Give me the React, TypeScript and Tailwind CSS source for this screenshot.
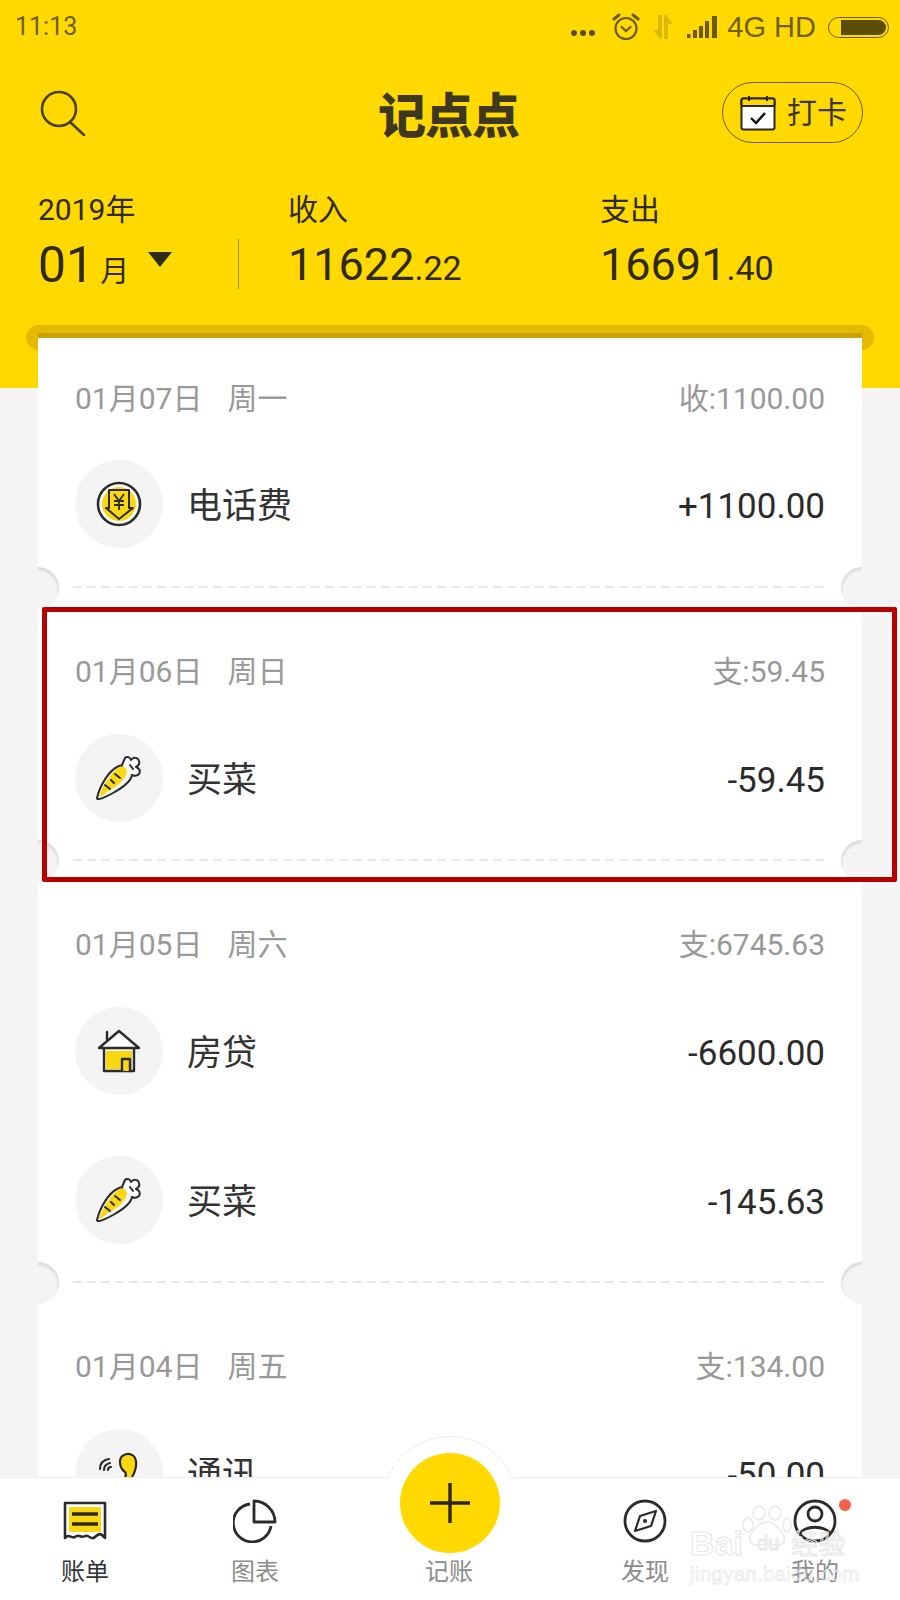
const font = { fontFamily: '"Roboto", "Noto Sans CJK SC", sans-serif' };

function SearchIcon() {
  return (
    <svg width="46" height="46" viewBox="0 0 46 46" fill="none" stroke="#4a4218" strokeWidth="2.6" strokeLinecap="round">
      <circle cx="19" cy="19" r="17" />
      <path d="M30 32 L44 45" />
    </svg>
  );
}

function CalendarIcon() {
  return (
    <svg width="36" height="36" viewBox="0 0 36 36" fill="none">
      <rect x="1.5" y="3.5" width="33" height="31" rx="2" fill="#fff" stroke="#2b2616" strokeWidth="2" />
      <path d="M1 4 H35 V11 H1 Z" fill="#ffd900" />
      <path d="M1.5 11 H34.5 M1.5 11 V5 Q1.5 3.5 3 3.5 H33 Q34.5 3.5 34.5 5 V11" stroke="#2b2616" strokeWidth="2" />
      <path d="M9 1 V6 M27 1 V6" stroke="#2b2616" strokeWidth="2" />
      <path d="M11 23 L16 28 L25 18" stroke="#111" strokeWidth="2.4" />
    </svg>
  );
}

function AlarmIcon() {
  return (
    <svg width="28" height="28" viewBox="0 0 28 28" fill="none" stroke="#6b5a08" strokeWidth="2.2" strokeLinecap="round">
      <circle cx="14" cy="15.5" r="10.5" />
      <path d="M9.5 14 L14 18 L18.5 14" />
      <path d="M2 6 L7 2 M26 6 L21 2" strokeWidth="3" />
    </svg>
  );
}

function StatusBar() {
  return (
    <div className="flex h-[52px] items-center justify-between pl-[15px] pr-[11px] pt-[2px] text-[#6f5f08]">
      <span className="text-[25px]" style={font}>11:13</span>
      <div className="flex items-center">
        <div className="mt-[12px] flex gap-[3px]">
          <div className="h-[6px] w-[6px] rounded-full bg-[#5a4d08]" />
          <div className="h-[6px] w-[6px] rounded-full bg-[#5a4d08]" />
          <div className="h-[6px] w-[6px] rounded-full bg-[#5a4d08]" />
        </div>
        <div className="ml-[17px]"><AlarmIcon /></div>
        <svg className="ml-[12px]" width="22" height="24" viewBox="0 0 22 24" fill="#d9b908">
          <path d="M6 0 H10 V24 H8 L1 15 H6 Z" />
          <path d="M12 0 H14 L21 9 H16 V24 H12 Z" />
        </svg>
        <svg className="ml-[13px]" width="31" height="22" viewBox="0 0 31 22" fill="#6b5a08">
          <rect x="0" y="18" width="3.5" height="4" />
          <rect x="6" y="14" width="4" height="8" />
          <rect x="12" y="10" width="4" height="12" />
          <rect x="18" y="5" width="4" height="17" />
          <rect x="25" y="0" width="5" height="22" />
        </svg>
        <span className="ml-[9px] text-[29px] leading-none" style={{ fontFamily: '"Liberation Sans", sans-serif' }}>4G HD</span>
        <div className="ml-[12px] flex h-[21px] w-[61px] items-center justify-end rounded-full border-[1.5px] border-[#6b5a08] p-[2px]">
          <div className="h-[15px] w-[45px] rounded-r-full rounded-l-[3px] bg-[#5a4d08]" />
        </div>
      </div>
    </div>
  );
}

function TopBar() {
  return (
    <div className="relative mt-[30px] flex h-[61px] items-center justify-between pl-[40px] pr-[37px]">
      <SearchIcon />
      <span
        className="absolute left-[378px] top-[-3px] text-[48px] leading-[66px] font-black tracking-[-1px] text-[#3d3720]"
        style={{ fontFamily: '"Noto Sans CJK SC", sans-serif' }}
      >
        记点点
      </span>
      <div className="flex h-[61px] w-[141px] items-center gap-[11px] rounded-full border border-[#6b5a08] pl-[17px]">
        <CalendarIcon />
        <span className="text-[30px] text-[#3d3720]" style={font}>打卡</span>
      </div>
    </div>
  );
}

function Summary() {
  return (
    <div className="mt-[50px] flex pl-[38px] text-[#2e2a16]" style={font}>
      <div className="w-[200px]">
        <div className="text-[30px] leading-[34px]">2019年</div>
        <div className="mt-[12px] flex items-baseline">
          <span className="text-[50px] leading-[52px]">01</span>
          <span className="ml-[6px] text-[29px]">月</span>
          <div className="mb-[14px] ml-[19px] h-0 w-0 self-center border-x-[12px] border-t-[15px] border-x-transparent border-t-[#2e2a16]" />
        </div>
      </div>
      <div className="mt-[46px] h-[50px] w-px bg-[#a89108]" />
      <div className="ml-[49px] w-[312px]">
        <div className="text-[30px] leading-[34px]">收入</div>
        <div className="mt-[12px] leading-[52px]">
          <span className="text-[45px]">11622</span>
          <span className="text-[34px]">.22</span>
        </div>
      </div>
      <div>
        <div className="text-[30px] leading-[34px]">支出</div>
        <div className="mt-[12px] leading-[52px]">
          <span className="text-[45px]">16691</span>
          <span className="text-[34px]">.40</span>
        </div>
      </div>
    </div>
  );
}

function YuanIcon() {
  return (
    <svg width="46" height="46" viewBox="0 0 46 46" fill="none">
      <circle cx="23" cy="23" r="21" fill="#fff" stroke="#2b2b2b" strokeWidth="2.6" />
      <circle cx="23" cy="23" r="17" fill="#fbd70f" />
      <path d="M13 9 H33 V27 L37 27 L23 38 L10 27 L13 27 Z" fill="#fbd70f" stroke="#2b2b2b" strokeWidth="2" strokeLinejoin="round" />
      <path d="M18 13 L23 20 L28 13 M23 20 V29 M18 20 H28 M18 24 H28" stroke="#2b2b2b" strokeWidth="1.8" />
    </svg>
  );
}

function CarrotIcon() {
  return (
    <svg width="46" height="46" viewBox="0 0 46 46" fill="none" stroke="#2b2b2b" strokeWidth="2" strokeLinecap="round" strokeLinejoin="round">
      <path d="M3 42 C7 30 15 18 22 13 C26 10 30 11 31 15 C31 23 22 31 14 35 C9 38 5 42 3 42 Z" fill="#fbd70f" stroke="none" />
      <path d="M1 43 C4 30 13 16 21 12 C25 9 28 10 31 12 C34 14 36 17 36 20 C35 26 26 33 17 38 C10 42 1 46 1 43 Z" />
      <path d="M26 10 L29 3 C31 1 34 2 35 5 C37 2 42 2 43 6 C44 9 42 11 40 12 C43 13 45 16 43 19 C41 21 38 21 36 20" fill="#fff" />
      <path d="M34 10 L37 14" />
      <path d="M19 19 L24 23 M9 30 L14 34 M15 25 L18 28" />
    </svg>
  );
}

function HouseIcon() {
  return (
    <svg width="46" height="46" viewBox="0 0 46 46" fill="none" stroke="#2b2b2b" strokeWidth="2.4" strokeLinejoin="round" strokeLinecap="round">
      <rect x="10" y="23" width="26" height="18" fill="#fbd70f" stroke="none" />
      <path d="M8 20 V43 H38 V20" />
      <path d="M3 20 L23 3 L43 20 Z" fill="#fff" />
      <path d="M11 12 V4" />
      <path d="M26 43 V31 H34 V43" fill="#fbd70f" />
    </svg>
  );
}

function EarIcon() {
  return (
    <svg width="46" height="46" viewBox="0 0 46 46" fill="none" stroke="#2b2b2b" strokeWidth="2.2" strokeLinecap="round" strokeLinejoin="round">
      <path d="M24 12 C23 3 38 0 40 11 C41 20 37 26 34 30 C31 34 28 40 24 40 C27 32 32 26 29 22 C26 20 24 17 24 12 Z" fill="#fbd70f" />
      <path d="M4 19 C4 13 7 10 13 9 M8 20 C8 16 10 14 14 13 M12 20 C12 18 13 17 15 17" />
    </svg>
  );
}

const sections = [
  {
    date: "01月07日",
    week: "周一",
    total: "收:1100.00",
    items: [{ icon: YuanIcon, name: "电话费", amount: "+1100.00" }],
  },
  {
    date: "01月06日",
    week: "周日",
    total: "支:59.45",
    items: [{ icon: CarrotIcon, name: "买菜", amount: "-59.45" }],
  },
  {
    date: "01月05日",
    week: "周六",
    total: "支:6745.63",
    items: [
      { icon: HouseIcon, name: "房贷", amount: "-6600.00" },
      { icon: CarrotIcon, name: "买菜", amount: "-145.63" },
    ],
  },
  {
    date: "01月04日",
    week: "周五",
    total: "支:134.00",
    items: [{ icon: EarIcon, name: "通讯", amount: "-50.00" }],
  },
];

function Section({ data, index }: { data: (typeof sections)[number]; index: number }) {
  return (
    <div className={index === 0 ? "relative pb-[40px] pl-[37px] pr-[37px] pt-[40px]" : "relative pb-[39px] pl-[37px] pr-[37px] pt-[63px]"}>
      <div className="flex h-[40px] items-center justify-between text-[30px] text-[#999999]">
        <div className="flex gap-[25px]">
          <span>{data.date}</span>
          <span>{data.week}</span>
        </div>
        <span>{data.total}</span>
      </div>
      <div className={index === 0 ? "mt-[42px] flex flex-col gap-[61px]" : "mt-[43px] flex flex-col gap-[61px]"}>
        {data.items.map((item) => (
          <div key={item.name} className="flex h-[88px] items-center">
            <div className="flex h-[88px] w-[88px] items-center justify-center rounded-full bg-[#f4f4f4]">
              <item.icon />
            </div>
            <span className="ml-[24px] pt-[6px] text-[35px] text-[#333333]">{item.name}</span>
            <span className="ml-auto pt-[6px] text-[35px] text-[#2b2b2b]">{item.amount}</span>
          </div>
        ))}
      </div>
      <div className="absolute bottom-0 left-[35px] right-[35px] h-[2px] bg-[repeating-linear-gradient(90deg,#e9e9e9_0_9px,transparent_9px_14px)]" />
      <div className="absolute bottom-[-21px] left-[-21px] h-[42px] w-[42px] rounded-full bg-[#f4f4f4] shadow-[inset_-1px_3px_2px_#dedede]" />
      <div className="absolute bottom-[-21px] right-[-21px] h-[42px] w-[42px] rounded-full bg-[#f4f4f4] shadow-[inset_1px_3px_2px_#dedede]" />
    </div>
  );
}

function BillIcon() {
  return (
    <svg width="44" height="40" viewBox="0 0 44 40" fill="none" stroke="#2b2b2b" strokeLinejoin="round">
      <rect x="6" y="6" width="32" height="25" fill="#fbd70f" stroke="none" />
      <path d="M2 37 V2 H42 V37 C38 32 36 32 32 36 C28 40 26 33 22 35 C18 38 16 32 12 36 C8 38 6 32 2 37 Z" strokeWidth="2.6" />
      <path d="M9 13 H35 M9 23 H35" strokeWidth="3.6" />
    </svg>
  );
}

function PieIcon() {
  return (
    <svg width="44" height="44" viewBox="0 0 44 44" fill="none" stroke="#2b2b2b" strokeWidth="2.8">
      <path d="M17 5 A19 19 0 1 0 38 27" />
      <path d="M21 2 A21 21 0 0 1 42 23 H21 Z" strokeLinejoin="round" />
    </svg>
  );
}

function CompassIcon() {
  return (
    <svg width="44" height="44" viewBox="0 0 44 44" fill="none" stroke="#2b2b2b" strokeWidth="2.8" strokeLinejoin="round">
      <circle cx="22" cy="22" r="20" />
      <path d="M33 12 L28 27 L12 32 L17 17 Z" strokeWidth="2.2" />
      <circle cx="22" cy="22" r="2" fill="#2b2b2b" stroke="none" />
    </svg>
  );
}

function ProfileIcon() {
  return (
    <svg width="44" height="44" viewBox="0 0 44 44" fill="none" stroke="#2b2b2b" strokeWidth="2.8">
      <circle cx="22" cy="22" r="20" />
      <circle cx="22" cy="15" r="7" />
      <path d="M7 35 C10 26 34 26 37 35" />
    </svg>
  );
}

function NavItem({ label, active, children }: { label: string; active?: boolean; children: React.ReactNode }) {
  return (
    <div className="relative flex w-[100px] flex-col items-center">
      <div className="flex h-[44px] items-center justify-center">{children}</div>
      <span className={active ? "mt-[11px] text-[24px] leading-[36px] text-[#333333]" : "mt-[11px] text-[24px] leading-[36px] text-[#8c8c8c]"}>{label}</span>
    </div>
  );
}

function Watermark() {
  return (
    <div className="pointer-events-none absolute left-[690px] top-[27px] w-[165px]">
      <svg className="absolute left-[52px] top-0" width="50" height="42" viewBox="0 0 50 42" fill="none" stroke="#e8e8e8" strokeWidth="1.5">
        <ellipse cx="6" cy="20" rx="5" ry="7" />
        <ellipse cx="17" cy="8" rx="6" ry="7" />
        <ellipse cx="33" cy="8" rx="6" ry="7" />
        <ellipse cx="45" cy="20" rx="4" ry="7" />
        <path d="M25 17 C16 17 6 30 8 36 C10 42 18 40 25 39 C32 40 40 42 42 36 C44 30 34 17 25 17 Z" />
      </svg>
      <div className="mt-[20px] flex items-center text-[34px] font-bold leading-[36px] text-transparent [-webkit-text-stroke:1px_#e6e6e6]" style={{ fontFamily: '"Liberation Sans", sans-serif' }}>
        Bai
        <span className="ml-[14px] text-[20px] font-normal">du</span>
        <span className="ml-[12px] text-[27px] font-normal" style={{ fontFamily: '"Noto Sans CJK SC", sans-serif' }}>经验</span>
      </div>
      <div className="mt-[2px] text-[20px] leading-[22px] tracking-[0.5px] text-transparent [-webkit-text-stroke:0.6px_#e2e2e2]" style={{ fontFamily: '"Liberation Sans", sans-serif' }}>jingyan.baidu.com</div>
    </div>
  );
}

function BottomNav() {
  return (
    <div className="relative z-10 h-[123px] shrink-0 border-t border-[#efefef] bg-white pl-[35px] pt-[21px]">
      <div className="absolute left-[382px] top-[-42px] h-[136px] w-[136px] rounded-full border border-[#eeeeee] bg-white" />
      <div className="absolute left-[380px] top-[1px] h-[100px] w-[140px] bg-white" />
      <div className="absolute left-[400px] top-[-25px] flex h-[100px] w-[100px] items-center justify-center rounded-full bg-[#ffd900]">
        <svg width="40" height="40" viewBox="0 0 40 40" stroke="#2b2616" strokeWidth="3.4">
          <path d="M20 0 V40 M0 20 H40" />
        </svg>
      </div>
      <div className="relative flex">
        <NavItem label="账单" active><BillIcon /></NavItem>
        <div className="ml-[70px]"><NavItem label="图表"><PieIcon /></NavItem></div>
        <div className="ml-[94px]"><NavItem label="记账"><div className="w-[44px]" /></NavItem></div>
        <div className="ml-[96px]"><NavItem label="发现"><CompassIcon /></NavItem></div>
        <div className="ml-[70px]"><NavItem label="我的"><ProfileIcon /></NavItem></div>
      </div>
      <div className="absolute left-[839px] top-[21px] h-[12px] w-[12px] rounded-full bg-[#f4604a]" />
      <Watermark />
    </div>
  );
}

export default function App() {
  return (
    <div className="relative flex h-[1600px] w-[900px] flex-col overflow-hidden bg-[#f4f4f4]" style={font}>
      <div className="h-[388px] shrink-0 bg-[#ffd900]">
        <StatusBar />
        <TopBar />
        <Summary />
      </div>
      <div className="relative z-0 mt-[-63px] min-h-0 flex-1 overflow-hidden">
        <div className="mx-[26px] h-[25px] rounded-full bg-[#e5b900]" />
        <div className="mx-[38px] mt-[-17px] h-[5px] bg-[#c9a300]" />
        <div className="relative mx-[38px] overflow-hidden bg-white">
          {sections.map((s, i) => (
            <Section key={s.date} data={s} index={i} />
          ))}
        </div>
      </div>
      <BottomNav />
      {/* Red annotation box drawn over the screenshot */}
      <div className="absolute left-[42px] top-[607px] h-[275px] w-[855px] rounded-[2px] border-[5px] border-[#b70000]" />
    </div>
  );
}
